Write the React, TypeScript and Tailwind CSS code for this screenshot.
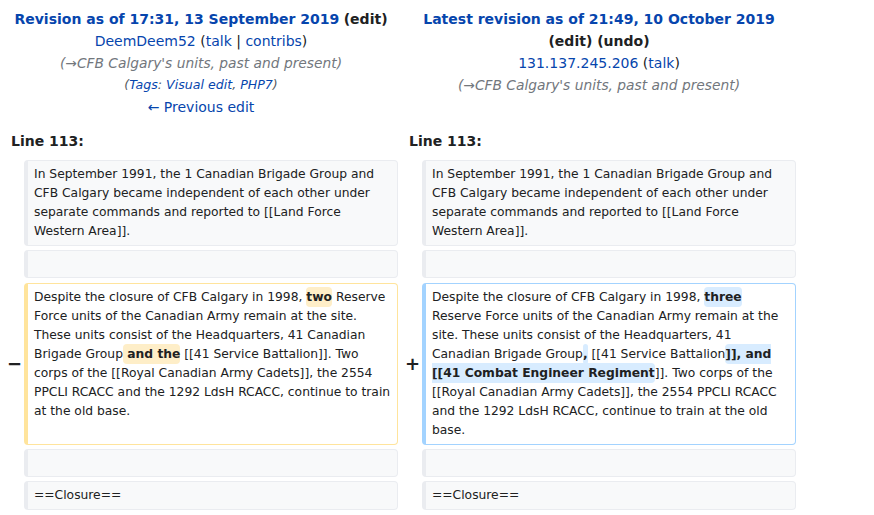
import type { ReactNode } from "react";

const link = "text-[#0645ad]";

const Context = ({ children }: { children?: ReactNode }) => (
  <div className="rounded-[4px] border border-l-4 border-[#eaecf0] bg-[#f8f9fa] px-[6px] py-1 whitespace-pre-wrap break-words min-h-[28px]">
    {children}
  </div>
);

const Marker = ({ sign }: { sign: string }) => (
  <div className="flex items-center justify-end">
    <span className="-mr-[2px] text-[18px] font-bold leading-none text-[#202122]">{sign}</span>
  </div>
);

const Del = ({ children }: { children: ReactNode }) => (
  <b className="rounded-[4px] bg-[#feeec8] py-[3px]">{children}</b>
);

const Ins = ({ children }: { children: ReactNode }) => (
  <b className="rounded-[4px] bg-[#d8ecff] py-[3px]">{children}</b>
);

export default function App() {
  return (
    <div className="min-h-screen bg-white font-['DejaVu_Sans',sans-serif] text-[14px] text-[#202122]">
      <div className="grid w-[800px] grid-cols-[16px_374px_16px_374px] gap-1 p-1">
        {/* revision headers */}
        <div className="col-span-2 px-[7px] py-1 text-center leading-[22px]">
          <div>
            <a className={`font-bold ${link}`}>Revision as of 17:31, 13 September 2019</a>{" "}
            <span className="font-bold">
              (<a>edit</a>)
            </span>
          </div>
          <div>
            <a className={link}>DeemDeem52</a> (<a className={link}>talk</a> |{" "}
            <a className={link}>contribs</a>)
          </div>
          <div className="text-[13.8px] italic text-[#72777d]">(→CFB Calgary's units, past and present)</div>
          <div className="text-[12.6px] italic text-[#54595d]">
            (<a className={link}>Tags</a>: <a className={link}>Visual edit</a>,{" "}
            <a className={link}>PHP7</a>)
          </div>
          <div>
            <a className={link}>← Previous edit</a>
          </div>
        </div>
        <div className="col-span-2 px-[7px] py-1 text-center leading-[22px]">
          <div>
            <a className={`font-bold ${link}`}>Latest revision as of 21:49, 10 October 2019</a>{" "}
            <span className="font-bold">
              (<a>edit</a>) (<a>undo</a>)
            </span>
          </div>
          <div>
            <a className={link}>131.137.245.206</a> (<a className={link}>talk</a>)
          </div>
          <div className="text-[13.8px] italic text-[#72777d]">(→CFB Calgary's units, past and present)</div>
        </div>

        {/* line numbers */}
        <div className="col-span-2 px-[7px] py-1 font-bold leading-[22px]">Line 113:</div>
        <div className="col-span-2 px-[7px] py-1 font-bold leading-[22px]">Line 113:</div>

        {/* diff body */}
        <div className="contents text-[12.3px] leading-[19px]">
          <div />
          <Context>
            In September 1991, the 1 Canadian Brigade Group and CFB Calgary became independent of each
            other under separate commands and reported to [[Land Force Western Area]].
          </Context>
          <div />
          <Context>
            In September 1991, the 1 Canadian Brigade Group and CFB Calgary became independent of each
            other under separate commands and reported to [[Land Force Western Area]].
          </Context>

          <div />
          <Context />
          <div />
          <Context />

          <Marker sign="−" />
          <div className="mt-px rounded-[4px] border border-l-4 border-[#ffe49c] bg-white px-[6px] py-1 break-words">
            Despite the closure of CFB Calgary in 1998, <Del>two</Del> Reserve Force units of the Canadian
            Army remain at the site. These units consist of the Headquarters, 41 Canadian Brigade Group
            <Del> and the</Del> [[41 Service Battalion]]. Two corps of the [[Royal Canadian Army Cadets]], the
            2554 PPCLI RCACC and the 1292 LdsH RCACC, continue to train at the old base.
          </div>
          <Marker sign="+" />
          <div className="mt-px rounded-[4px] border border-l-4 border-[#a3d3ff] bg-white px-[6px] py-1 break-words">
            Despite the closure of CFB Calgary in 1998, <Ins>three</Ins> Reserve Force units of the Canadian
            Army remain at the site. These units consist of the Headquarters, 41 Canadian Brigade Group
            <Ins>,</Ins> [[41 Service Battalion<Ins>]], and [[41 Combat Engineer Regiment</Ins>]]. Two corps
            of the [[Royal Canadian Army Cadets]], the 2554 PPCLI RCACC and the 1292 LdsH RCACC, continue
            to train at the old base.
          </div>

          <div />
          <Context />
          <div />
          <Context />

          <div />
          <Context>==Closure==</Context>
          <div />
          <Context>==Closure==</Context>
        </div>
      </div>
    </div>
  );
}
